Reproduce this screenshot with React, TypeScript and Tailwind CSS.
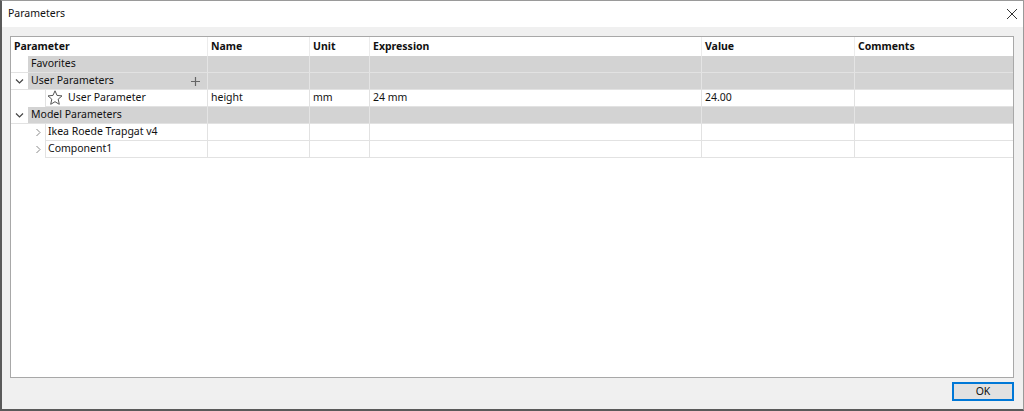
import React from 'react'

const cols = 'grid grid-cols-[196px_102px_60px_332px_153px_1fr]'
const font = { fontFamily: '"Noto Sans", "Open Sans", sans-serif' }

function Chevron({ open }: { open: boolean }) {
  return (
    <svg width="9" height="9" viewBox="0 0 9 9">
      {open ? (
        <path d="M1 2.5 L4.5 6 L8 2.5" fill="none" stroke="#444" strokeWidth="1.2" />
      ) : (
        <path d="M2.5 1 L6 4.5 L2.5 8" fill="none" stroke="#888" strokeWidth="1" />
      )}
    </svg>
  )
}

function Star() {
  return (
    <svg width="16" height="16" viewBox="0 0 16 16">
      <path
        d="M8 0.8 L10 5.4 L15 5.9 L11.2 9.2 L12.3 14.3 L8 11.7 L3.7 14.3 L4.8 9.2 L1 5.9 L6 5.4 Z"
        fill="none"
        stroke="#555"
        strokeWidth="1"
        strokeLinejoin="round"
      />
    </svg>
  )
}

function GroupRow({ label, chevron, plus }: { label: string; chevron?: boolean; plus?: boolean }) {
  return (
    <div className={`${cols} h-[17px] border-b border-[#e2e2e2]`}>
      <div className="flex h-full">
        <div className="w-[17px] flex items-center justify-center bg-white pr-[1px]">{chevron && <Chevron open />}</div>
        <div className="flex-1 flex items-center justify-between bg-[#d3d3d3] pl-[3px] pr-[7px]">
          <span>{label}</span>
          {plus && (
            <svg width="9" height="9" viewBox="0 0 9 9">
              <path d="M4.5 0 V9 M0 4.5 H9" stroke="#666" strokeWidth="1.2" />
            </svg>
          )}
        </div>
      </div>
      {[0, 1, 2, 3, 4].map(i => (
        <div key={i} className="bg-[#d3d3d3] border-l border-[#e4e4e4]" />
      ))}
    </div>
  )
}

function DataRow({ children, cells }: { children: React.ReactNode; cells: string[] }) {
  return (
    <div className={`${cols} h-[17px]`}>
      {children}
      {cells.map((c, i) => (
        <div key={i} className="border-l border-b border-[#e2e2e2] flex items-center pl-[3px]">
          {c}
        </div>
      ))}
    </div>
  )
}

function ChildRow({ label }: { label: string }) {
  return (
    <DataRow cells={['', '', '', '', '']}>
      <div className="flex h-full">
        <div className="w-[17px]" />
        <div className="w-[17px] flex items-center justify-center pl-[3px]">
          <Chevron open={false} />
        </div>
        <div className="flex-1 flex items-center border-l border-b border-[#e2e2e2] pl-[2px]">{label}</div>
      </div>
    </DataRow>
  )
}

export default function App() {
  return (
    <div
      className="w-[1024px] h-[411px] bg-[#f0f0f0] border-t border-[#9a9a9a] border-l-2 border-l-[#5a5a5a] border-r border-r-[#9a9a9a] border-b-2 border-b-[#5a5a5a] flex flex-col text-[10.5px] text-[#111]"
      style={font}
    >
      <div className="h-[26px] shrink-0 bg-white flex items-center justify-between pl-[6px] pr-[5px]">
        <span className="text-[10.5px]">Parameters</span>
        <svg width="12" height="12" viewBox="0 0 12 12">
          <path d="M1 1 L11 11 M11 1 L1 11" stroke="#333" strokeWidth="1" />
        </svg>
      </div>
      <div className="pt-[9px] pl-[8px] pr-[9px]">
        <div className="h-[342px] bg-white border border-[#a8a8a8]">
          <div className={`${cols} h-[19px] font-bold`}>
            <div className="flex items-center pl-[3px]">Parameter</div>
            {['Name', 'Unit', 'Expression', 'Value', 'Comments'].map(h => (
              <div key={h} className="flex items-center pl-[3px] border-l border-[#ececec]">
                {h}
              </div>
            ))}
          </div>
          <GroupRow label="Favorites" />
          <GroupRow label="User Parameters" chevron plus />
          <DataRow cells={['height', 'mm', '24 mm', '24.00', '']}>
            <div className="flex h-full">
              <div className="w-[34px]" />
              <div className="flex-1 flex items-center border-l border-b border-[#e2e2e2] pl-[1px] gap-[5px]">
                <Star />
                <span>User Parameter</span>
              </div>
            </div>
          </DataRow>
          <GroupRow label="Model Parameters" chevron />
          <ChildRow label="Ikea Roede Trapgat v4" />
          <ChildRow label="Component1" />
        </div>
      </div>
      <div className="flex justify-end pr-[9px] pt-[4px]">
        <button className="w-[62px] h-[19px] bg-[#e1e1e1] border-2 border-[#0078d7] text-[10.5px] leading-none">
          OK
        </button>
      </div>
    </div>
  )
}
